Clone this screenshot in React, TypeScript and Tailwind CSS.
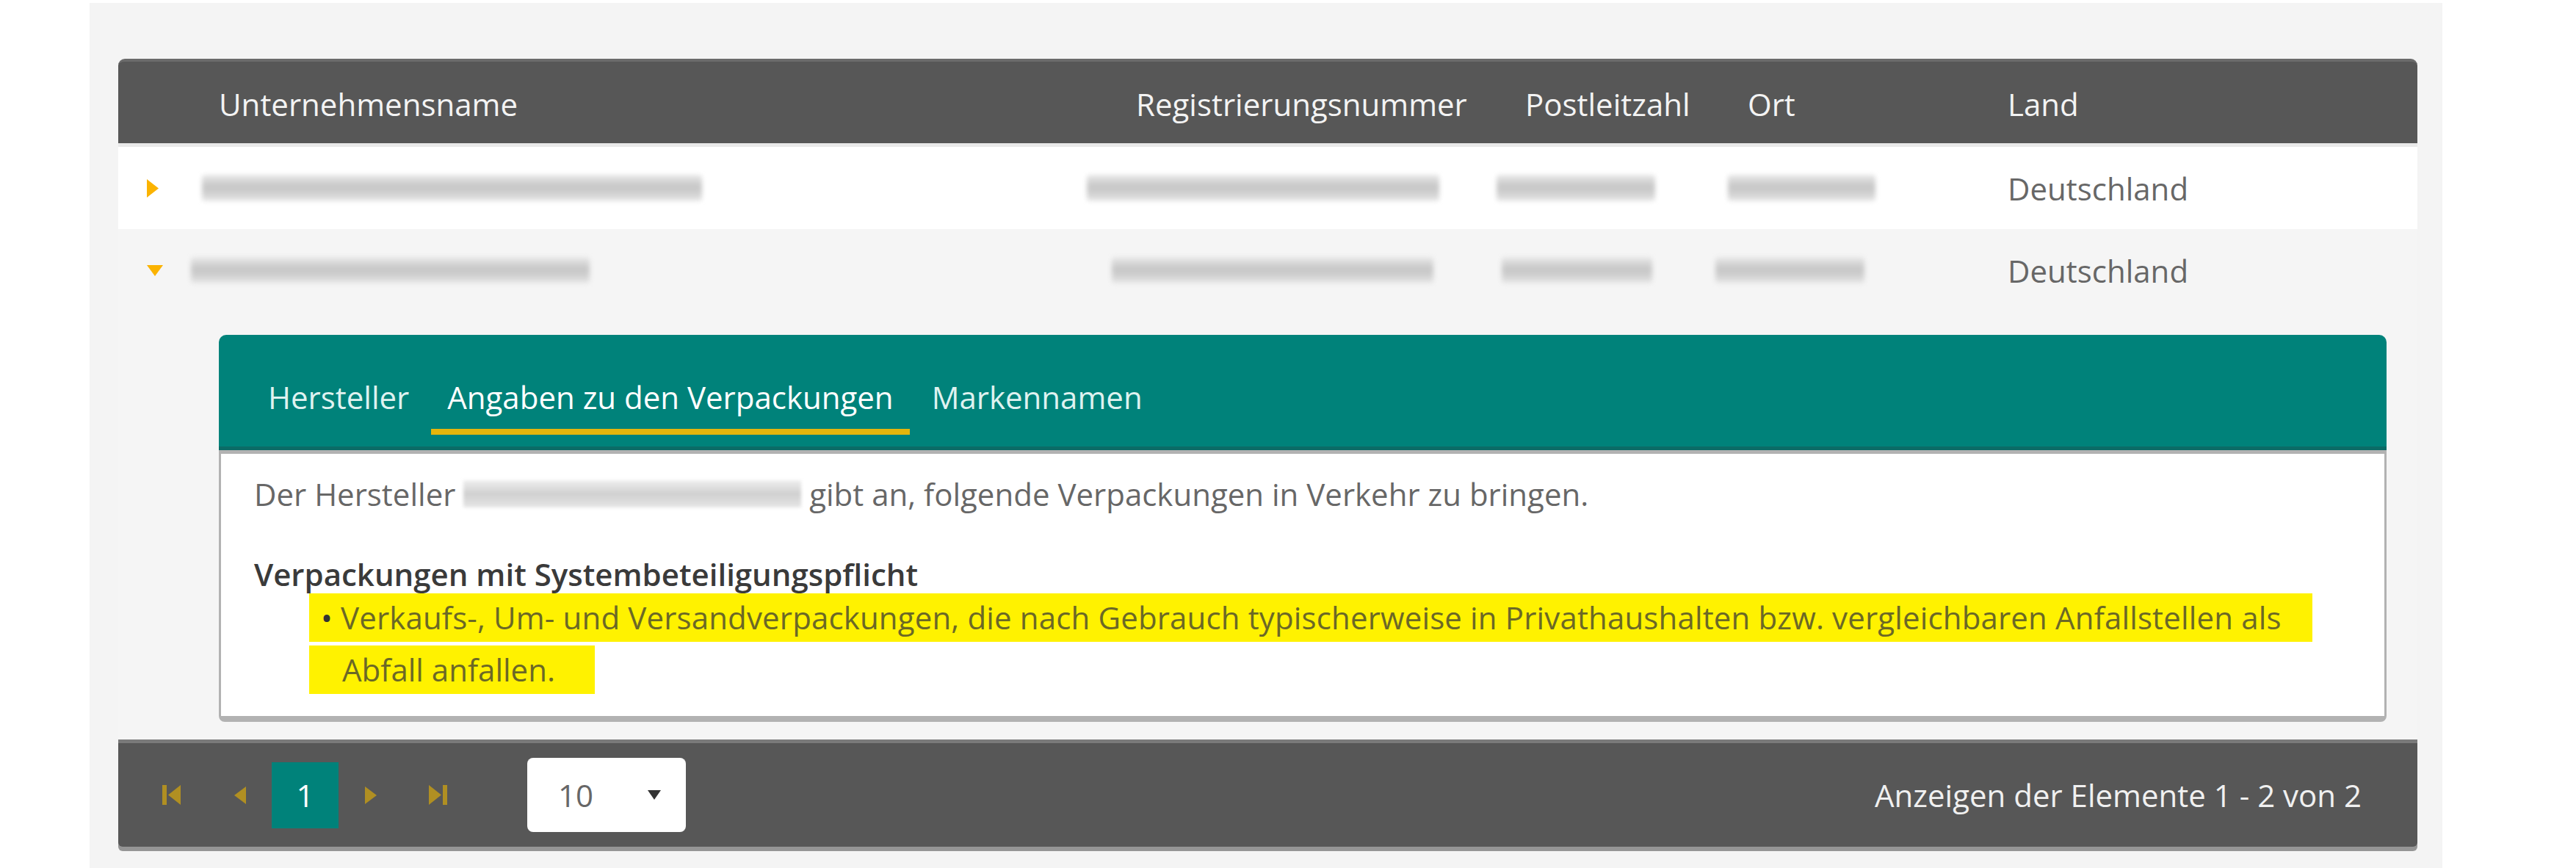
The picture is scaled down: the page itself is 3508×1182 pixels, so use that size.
import React from "react"

type RowData = {
  open: boolean
  bg: string
  blurs: [number, number][]
}

const rows: RowData[] = [
  { open: false, bg: "bg-white", blurs: [[5, 681], [-39, 480], [-11, 216], [1, 201]] },
  { open: true, bg: "bg-[#f5f5f5]", blurs: [[-10, 543], [-5, 438], [-4, 205], [-16, 203]] },
]

const cols = "grid grid-cols-[109px_1249px_530px_303px_354px_1fr] items-center"

function Blur({ x, w }: { x: number; w: number }) {
  return (
    <div
      className="h-[36px] rounded-sm bg-[linear-gradient(180deg,#e9e9e9,#c6c6c6_45%,#d0d0d0_70%,#e9e9e9)] blur-[3px]"
      style={{ marginLeft: x, width: w }}
    />
  )
}

function Caret({ open }: { open: boolean }) {
  return open ? (
    <svg width="22" height="15" viewBox="0 0 22 15" className="text-[#fbb300]">
      <path d="M0 0h22L11 15z" fill="currentColor" />
    </svg>
  ) : (
    <svg width="16" height="25" viewBox="0 0 16 25" className="text-[#fbb300]">
      <path d="M0 0v25L16 12.5z" fill="currentColor" />
    </svg>
  )
}

function PagerIcon({ kind }: { kind: "first" | "prev" | "next" | "last" }) {
  if (kind === "first")
    return (
      <svg width="25" height="27" viewBox="0 0 25 27">
        <rect x="0" y="0" width="6" height="27" fill="currentColor" />
        <path d="M25 0v27L8 13.5z" fill="currentColor" />
      </svg>
    )
  if (kind === "last")
    return (
      <svg width="27" height="27" viewBox="0 0 27 27">
        <path d="M0 0v27L17 13.5z" fill="currentColor" />
        <rect x="19" y="0" width="6" height="27" fill="currentColor" />
      </svg>
    )
  if (kind === "prev")
    return (
      <svg width="20" height="24" viewBox="0 0 20 24">
        <path d="M20 0v24L4 12z" fill="currentColor" />
      </svg>
    )
  return (
    <svg width="20" height="24" viewBox="0 0 20 24">
      <path d="M0 0v24L16 12z" fill="currentColor" />
    </svg>
  )
}

function DetailPanel() {
  return (
    <div className="w-[2952px]">
      <div className="flex h-[157px] items-end gap-[8px] rounded-t-[10px] border-b-[5px] border-[#0b6b66] bg-[#00827a] pb-[16px] pl-[45px]">
        <div className="border-b-[8px] border-transparent px-[22px] pb-[14px] leading-[59px] text-[#dff2f0]">Hersteller</div>
        <div className="border-b-[8px] border-[#e4b50c] px-[22px] pb-[14px] leading-[59px] text-white">
          Angaben zu den Verpackungen
        </div>
        <div className="border-b-[8px] border-transparent px-[22px] pb-[14px] leading-[59px] text-[#dff2f0]">Markennamen</div>
      </div>
      <div className="rounded-b-[8px] border-x-[3px] border-b-[8px] border-t-[5px] border-[#b2b2b2] bg-white pb-[30px] pl-[45px] pt-[25px]">
        <div className="flex items-center leading-[59px] text-[#676767]">
          <span>Der Hersteller&nbsp;</span>
          <span className="inline-block h-[37px] w-[460px] bg-[linear-gradient(180deg,#efefef,#d0d0d0_50%,#e6e6e6)] blur-[2px]" />
          <span>&nbsp;gibt an, folgende Verpackungen in Verkehr zu bringen.</span>
        </div>
        <div className="mt-[50px] font-semibold leading-[59px] text-[#3a3a3a]">Verpackungen mit Systembeteiligungspflicht</div>
        <div className="-mt-[3px] ml-[75px] flex flex-col items-start gap-[5px] text-[#6b6826]">
          <div className="h-[66px] w-[2728px] whitespace-nowrap bg-[#fff200] pl-[16px] leading-[66px] tracking-[0.15px]">
            <span className="text-[#333]">•</span> Verkaufs-, Um- und Versandverpackungen, die nach Gebrauch typischerweise in
            Privathaushalten bzw. vergleichbaren Anfallstellen als
          </div>
          <div className="h-[66px] w-[389px] whitespace-nowrap bg-[#fff200] pl-[45px] leading-[66px]">Abfall anfallen.</div>
        </div>
      </div>
    </div>
  )
}

export default function App() {
  return (
    <div className="h-[1182px] bg-white pt-[4px] font-['Open_Sans',sans-serif] text-[42px]">
      <div className="ml-[122px] h-[1178px] w-[3204px] bg-[#f4f4f4] pl-[39px] pt-[76px]">
        <div className="w-[3131px]">
          {/* header */}
          <div className={`${cols} h-[115px] rounded-t-[9px] border-t-[4px] border-[#6b6b6b] bg-[#575757] pt-[4px] text-[#f3f3f3]`}>
            <div />
            <div className="pl-[28px]">Unternehmensname</div>
            <div className="pl-[28px]">Registrierungsnummer</div>
            <div className="pl-[28px]">Postleitzahl</div>
            <div className="pl-[28px]">Ort</div>
            <div className="pl-[28px]">Land</div>
          </div>
          <div className="h-[5px] bg-[#e9e9e9]" />

          {/* rows */}
          <div className="shadow-[inset_3px_0_0_#c9c9c9,inset_-3px_0_0_#c9c9c9]">
            {rows.map((r, i) => (
              <div key={i} className={`${cols} h-[112px] ${r.bg}`}>
                <div className="pl-[39px]">
                  <Caret open={r.open} />
                </div>
                {r.blurs.map(([x, w], j) => (
                  <div key={j}>
                    <Blur x={x} w={w} />
                  </div>
                ))}
                <div className="pl-[28px] text-[#676767]">Deutschland</div>
              </div>
            ))}
            <div className="bg-[#f5f5f5] pb-[24px] pl-[137px] pt-[32px]">
              <DetailPanel />
            </div>
          </div>

          {/* pager */}
          <div className="flex h-[146px] items-center rounded-b-[6px] border-t-[5px] border-[#7a7a7a] bg-[#575757] pl-[27px] pr-[76px] shadow-[0_6px_0_#959595]">
            <div className="flex items-center text-[#b08f22]">
              <div className="flex w-[91px] justify-center">
                <PagerIcon kind="first" />
              </div>
              <div className="flex w-[91px] justify-center">
                <PagerIcon kind="prev" />
              </div>
              <div className="flex h-[90px] w-[91px] items-center justify-center bg-[#00827a] text-white">1</div>
              <div className="flex w-[91px] justify-center">
                <PagerIcon kind="next" />
              </div>
              <div className="flex w-[91px] justify-center">
                <PagerIcon kind="last" />
              </div>
            </div>
            <div className="ml-[75px] flex h-[101px] w-[216px] items-center rounded-[8px] bg-white pl-[42px] pr-[34px] text-[#676767]">
              <span>10</span>
              <svg width="18" height="13" viewBox="0 0 18 13" className="ml-auto text-[#333]">
                <path d="M0 0h18L9 13z" fill="currentColor" />
              </svg>
            </div>
            <div className="ml-auto text-[#f0f0f0]">Anzeigen der Elemente 1 - 2 von 2</div>
          </div>
        </div>
      </div>
    </div>
  )
}
